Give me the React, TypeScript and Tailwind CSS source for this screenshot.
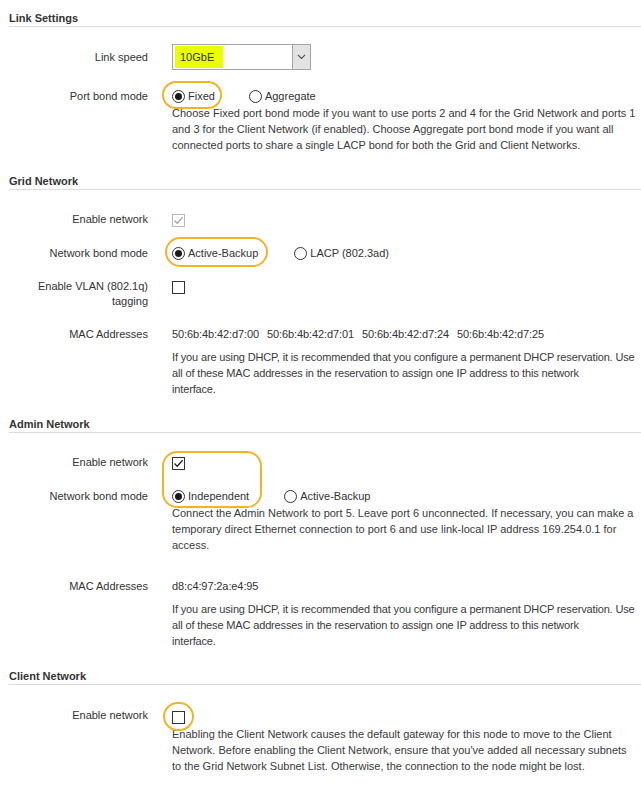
import type { ReactNode } from "react";

// Small form primitives drawn to look like the legacy browser widgets
function Radio({ checked }: { checked?: boolean }) {
  return (
    <span className="flex h-[13px] w-[13px] shrink-0 items-center justify-center rounded-full border border-[#333] bg-white">
      {checked ? <span className="h-[7px] w-[7px] rounded-full bg-[#1a1a1a]" /> : null}
    </span>
  );
}

function Checkbox({ checked, disabled }: { checked?: boolean; disabled?: boolean }) {
  return (
    <span
      className={`flex h-[13px] w-[13px] shrink-0 items-center justify-center border bg-white ${
        disabled ? "border-[#b8b8b8]" : "border-[#333]"
      }`}
    >
      {checked ? (
        <svg width="11" height="11" viewBox="0 0 11 11" fill="none">
          <path
            d="M1.5 5.5 L4.2 8.2 L9.6 2.3"
            stroke={disabled ? "#a8a8a8" : "#222"}
            strokeWidth="1.3"
          />
        </svg>
      ) : null}
    </span>
  );
}

function Option({ checked, label, ring }: { checked?: boolean; label: string; ring?: string }) {
  return (
    <span className="relative flex items-center gap-[3px]">
      {ring ? <span className={`pointer-events-none absolute rounded-full border-[2.5px] border-[#f2b32a] ${ring}`} /> : null}
      <Radio checked={checked} />
      <span>{label}</span>
    </span>
  );
}

function Row({ label, children, className = "", labelClass = "" }: { label: ReactNode; children: ReactNode; className?: string; labelClass?: string }) {
  return (
    <div className={`flex ${className}`}>
      <div className={`w-[139px] shrink-0 text-right ${labelClass}`}>{label}</div>
      <div className="ml-[24px] w-[465px]">{children}</div>
    </div>
  );
}

function Heading({ title, className = "" }: { title: string; className?: string }) {
  return <div className={`border-b border-[#dcdcdc] font-bold text-[#333] ${className}`}>{title}</div>;
}

// help text keeps the original line breaks
function Desc({ lines, className = "" }: { lines: string[]; className?: string }) {
  return (
    <div className={`ml-[163px] w-[469px] whitespace-nowrap text-[#3a3a3a] ${className}`}>
      {lines.map((l) => (
        <div key={l}>{l}</div>
      ))}
    </div>
  );
}

const dhcpLines = [
  "If you are using DHCP, it is recommended that you configure a permanent DHCP reservation. Use",
  "all of these MAC addresses in the reservation to assign one IP address to this network",
  "interface.",
];

export default function App() {
  return (
    <div
      className="min-h-[787px] w-[641px] overflow-hidden bg-white pl-[9px] pt-[10px] text-[11px] leading-[16px] text-[#333]"
      style={{ fontFamily: '"Liberation Sans", Arial, sans-serif' }}
    >
      {/* Link Settings */}
      <Heading title="Link Settings" />
      <Row label="Link speed" className="mt-[17px] items-center">
        <div className="flex h-[26px] w-[139px] border border-[#a5a5a5] bg-white">
          <div className="flex flex-1 items-center p-[1px] pl-[2px]">
            <span className="flex h-[22px] w-[48px] items-center bg-[#eaff00] pl-[5px]">10GbE</span>
          </div>
          <div className="flex w-[18px] items-center justify-center border-l border-[#a5a5a5] bg-[#e3e3e3]">
            <svg width="9" height="6" viewBox="0 0 9 6" fill="none">
              <path d="M1 1 L4.5 4.5 L8 1" stroke="#555" strokeWidth="1.1" />
            </svg>
          </div>
        </div>
      </Row>
      <Row label="Port bond mode" className="mt-[18px]">
        <div className="flex h-[16px] items-center">
          <Option checked label="Fixed" ring="-left-[10px] -top-[7px] h-[28px] w-[60px]" />
          <span className="ml-[34px]">
            <Option label="Aggregate" />
          </span>
        </div>
      </Row>
      <Desc
        className="mt-[1px]"
        lines={[
          "Choose Fixed port bond mode if you want to use ports 2 and 4 for the Grid Network and ports 1",
          "and 3 for the Client Network (if enabled). Choose Aggregate port bond mode if you want all",
          "connected ports to share a single LACP bond for both the Grid and Client Networks.",
        ]}
      />

      {/* Grid Network */}
      <Heading title="Grid Network" className="mt-[20px]" />
      <Row label="Enable network" className="mt-[21px]">
        <div className="flex h-[16px] items-start pt-[3px]">
          <Checkbox checked disabled />
        </div>
      </Row>
      <Row label="Network bond mode" className="mt-[18px]">
        <div className="flex h-[16px] items-center">
          <Option checked label="Active-Backup" ring="-left-[7px] -top-[8px] h-[30px] w-[103px]" />
          <span className="ml-[36px]">
            <Option label="LACP (802.3ad)" />
          </span>
        </div>
      </Row>
      <Row label="Enable VLAN (802.1q) tagging" className="mt-[18px]" labelClass="leading-[15px]">
        <div className="flex h-[16px] items-start pt-[2px]">
          <Checkbox />
        </div>
      </Row>
      <Row label="MAC Addresses" className="mt-[17px]">
        <div className="flex gap-[8px] tracking-[-0.1px]">
          <span>50:6b:4b:42:d7:00</span>
          <span>50:6b:4b:42:d7:01</span>
          <span>50:6b:4b:42:d7:24</span>
          <span>50:6b:4b:42:d7:25</span>
        </div>
      </Row>
      <Desc className="mt-[7px] tracking-[-0.15px]" lines={dhcpLines} />

      {/* Admin Network */}
      <Heading title="Admin Network" className="mt-[19px]" />
      <div className="relative pt-[21px]">
        <span className="pointer-events-none absolute left-[153px] top-[18px] h-[57px] w-[100px] rounded-[15px] border-[2.5px] border-[#f2b32a]" />
        <Row label="Enable network">
          <div className="flex h-[16px] items-start pt-[3px]">
            <Checkbox checked />
          </div>
        </Row>
        <Row label="Network bond mode" className="mt-[18px]">
          <div className="flex h-[16px] items-center">
            <Option checked label="Independent" />
            <span className="ml-[35px]">
              <Option label="Active-Backup" />
            </span>
          </div>
        </Row>
      </div>
      <Desc
        className="mt-[1px]"
        lines={[
          "Connect the Admin Network to port 5. Leave port 6 unconnected. If necessary, you can make a",
          "temporary direct Ethernet connection to port 6 and use link-local IP address 169.254.0.1 for",
          "access.",
        ]}
      />
      <Row label="MAC Addresses" className="mt-[25px]">
        <span className="tracking-[-0.1px]">d8:c4:97:2a:e4:95</span>
      </Row>
      <Desc className="mt-[7px] tracking-[-0.15px]" lines={dhcpLines} />

      {/* Client Network */}
      <Heading title="Client Network" className="mt-[19px]" />
      <Row label="Enable network" className="mt-[22px]">
        <div className="flex h-[16px] items-start pt-[4px]">
          <span className="relative">
            <span className="pointer-events-none absolute -left-[9px] -top-[9px] h-[29px] w-[31px] rounded-full border-[2.5px] border-[#f2b32a]" />
            <Checkbox />
          </span>
        </div>
      </Row>
      <Desc
        className="mt-[3px]"
        lines={[
          "Enabling the Client Network causes the default gateway for this node to move to the Client",
          "Network. Before enabling the Client Network, ensure that you've added all necessary subnets",
          "to the Grid Network Subnet List. Otherwise, the connection to the node might be lost.",
        ]}
      />
    </div>
  );
}
